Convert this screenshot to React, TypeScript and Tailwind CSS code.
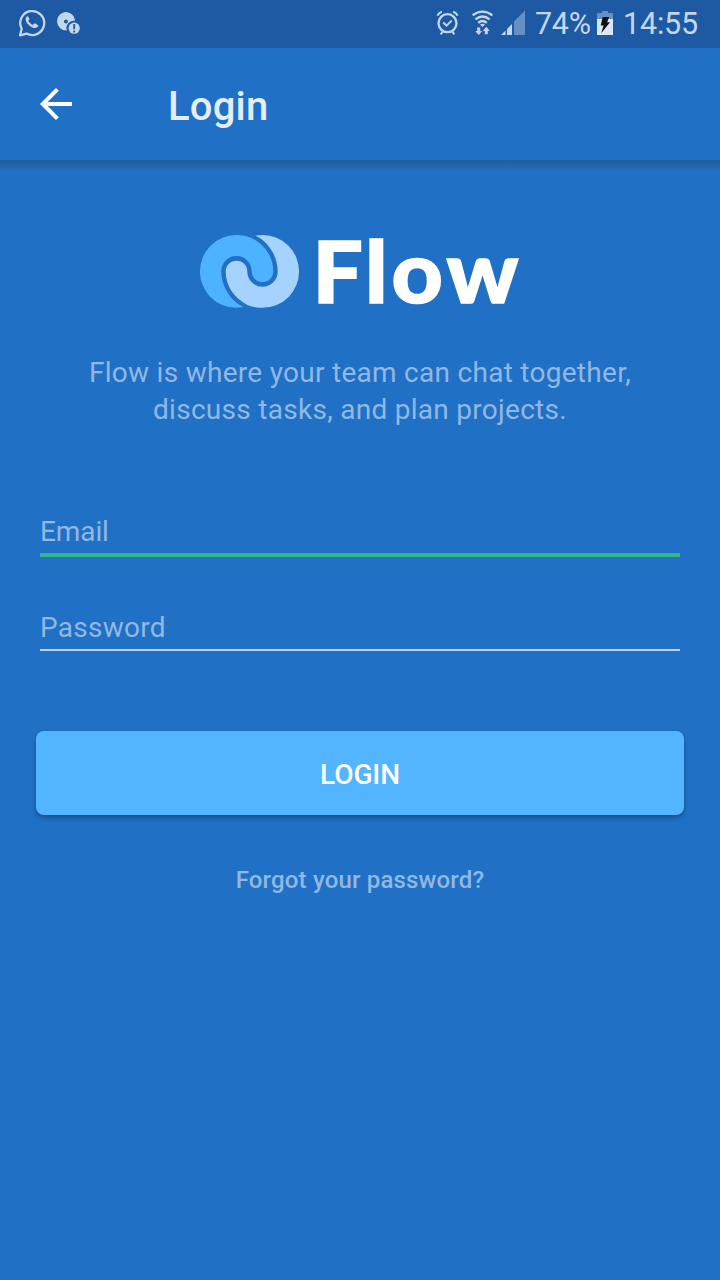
import React from "react";

function StatusBar() {
  return (
    <div className="flex h-12 shrink-0 items-center bg-[#1e5aa3] text-[#c4d6ec]">
      <svg className="h-12 w-[90px] shrink-0" viewBox="0 0 90 48" fill="none">
        <path d="M20.1 35.3l1.6-6.5a12 12 0 1 1 4.8 4.8z" stroke="currentColor" strokeWidth="2.3" strokeLinejoin="round" />
        <path d="M27.9 16.2c-.8-.3-2.2 1.1-2.3 2.7-.1 4.3 6.1 9.6 9.9 9.1 1.6-.3 2.9-1.6 2.7-2.8l-3.3-1.9c-.7-.2-1.5 1.6-2.2 1.5-1.8-.6-3.4-2.2-4.2-3.9-.1-.6 1.1-1.4 1-2.1z" fill="currentColor" />
        <path d="M65.8 11.9a9.6 9.6 0 0 1 9.3 8.9 7.3 7.3 0 0 0-8.2 9.7 9.3 9.3 0 1 1-1.1-18.6zm.1 7.5a2 2 0 1 0 0 4 2 2 0 0 0 0-4z" fill="currentColor" fillRule="evenodd" />
        <circle cx="74.2" cy="28.2" r="5.6" fill="currentColor" />
        <path d="M74.2 24v5.2M74.2 30.6v1.8" stroke="#1e5aa3" strokeWidth="1.8" />
      </svg>
      <svg className="ml-auto h-12 w-[100px] shrink-0" viewBox="430 0 100 48" fill="none" stroke="currentColor">
        <circle cx="447.5" cy="23.2" r="9" strokeWidth="2.3" />
        <path d="M443.2 22.5l3.3 3.1 5.2-5M442.5 31.5l-1.7 3M452.5 31.5l1.7 3" strokeWidth="2" />
        <path d="M437.4 15.6q1.3-3 4.4-3.9M457.6 15.6q-1.3-3-4.4-3.9" strokeWidth="2.2" />
        <path d="M472.6 15.3q9.9-7.3 19.8 0M475.4 19.3q7.1-5.7 14.2 0M478.2 22.8q4.3-3.7 8.6 0" strokeWidth="2.3" />
        <path d="M480 24.4q2.5-1.2 5 0l-2.5 2.6z" fill="currentColor" stroke="none" />
        <path d="M477.2 27.5h3v3.4h2L478.7 35l-3.5-4.1h2zM484.8 34.3h3v-3.2h2l-3.5-4.3-3.5 4.3h2z" fill="currentColor" stroke="none" />
        <path d="M501 35l4.6-4.6V35zM507 29l5-5V35h-5z" fill="currentColor" stroke="none" />
        <path d="M514 21.5L525 10.5V35h-11z" fill="#668fc3" stroke="none" />
      </svg>
      <div className="flex w-[190px] shrink-0 items-center font-[Roboto,sans-serif] text-[30.5px] leading-none">
        <span className="w-[67px] pl-[5px] tracking-[-0.3px]">74%</span>
        <svg className="h-12 w-4 shrink-0" viewBox="597 0 16 48">
          <path d="M602 11h6v2h5v7h-16v-7h5z" fill="#668fc3" />
          <path d="M597 19h16v16h-16z" fill="#dce7f5" />
          <path d="M602.7 17h6.5l-2.1 5.2h2.9l-8.8 11 2.4-7.6h-2.9z" fill="#111" />
        </svg>
        <span className="pl-2.5 tracking-[-0.2px]">14:55</span>
      </div>
    </div>
  );
}

const HALF_SWIRL =
  "M255.3 235.8Q259 235 262.7 235A36.4 36.4 0 0 1 262.7 307.8C257 307.8 252 306.7 247.3 304.9C234 298 225.7 286 225.7 271.5A10.8 10.8 0 0 1 247.3 271.5A15.2 15.2 0 0 0 277.7 271.5C277.7 256 268 241 255.3 235.8Z";

function Logo() {
  return (
    <svg className="mt-[40px] h-[140px] w-[340px]" viewBox="190 200 340 140" role="img" aria-label="Flow">
      <path d={HALF_SWIRL} fill="#a6d2ff" />
      <path d={HALF_SWIRL} fill="#4db2ff" transform="rotate(180 249.5 271.4)" />
      <text
        x="312.5 365 391.5 446.6"
        y="312.8"
        transform="scale(1 0.97)"
        fill="#fff"
        stroke="#fff"
        strokeWidth="1.6"
        className="font-[Lato,sans-serif] text-[89px] font-black"
      >
        Flow
      </text>
    </svg>
  );
}

export default function App() {
  return (
    <div className="flex h-[1280px] w-[720px] flex-col overflow-hidden bg-[#2070c6] font-[Roboto,sans-serif]">
      <StatusBar />
      <header className="flex h-28 shrink-0 items-center pl-10">
        <button type="button" aria-label="Back">
          <svg className="h-8 w-8" viewBox="0 0 32 32" fill="none" stroke="#fff" strokeWidth="4">
            <path d="M32 16H3M17.4 1.4L2.8 16l14.6 14.6" />
          </svg>
        </button>
        <h1 className="pt-1.5 pl-24 text-[40px] leading-none font-medium tracking-[0.2px] text-[#e4edf8]">Login</h1>
      </header>
      <div className="h-3 shrink-0 bg-linear-to-b from-[#245c99] to-[#2070c6]" />
      <main className="-mt-3 flex flex-col items-center">
        <Logo />
        <p className="mt-[14px] text-center text-[28px] leading-[37px] tracking-[0.28px] text-[#90b8e3]">
          Flow is where your team can chat together,
          <br />
          discuss tasks, and plan projects.
        </p>
        <form className="flex w-full flex-col items-center" onSubmit={(e) => e.preventDefault()}>
          <input
            type="email"
            placeholder="Email"
            className="mt-[79px] h-[50px] w-[640px] border-b-4 border-[#31b78a] pt-0.5 text-[28px] tracking-[-0.1px] text-white outline-none placeholder:text-[#90b8e3]"
          />
          <input
            type="password"
            placeholder="Password"
            className="mt-[46px] h-12 w-[640px] border-b-2 border-[#bcd4ee] pt-0.5 text-[28px] tracking-[0.25px] text-white outline-none placeholder:text-[#90b8e3]"
          />
          <button
            type="submit"
            className="mt-20 h-[84px] w-[648px] rounded-lg bg-[#53b4ff] pt-1 text-[28px] font-medium tracking-[-0.1px] text-white shadow-[0_3px_5px_rgba(0,0,0,0.28)]"
          >
            LOGIN
          </button>
        </form>
        <a className="mt-[49px] text-2xl font-medium tracking-[0.17px] text-[#90b8e3]">Forgot your password?</a>
      </main>
    </div>
  );
}
